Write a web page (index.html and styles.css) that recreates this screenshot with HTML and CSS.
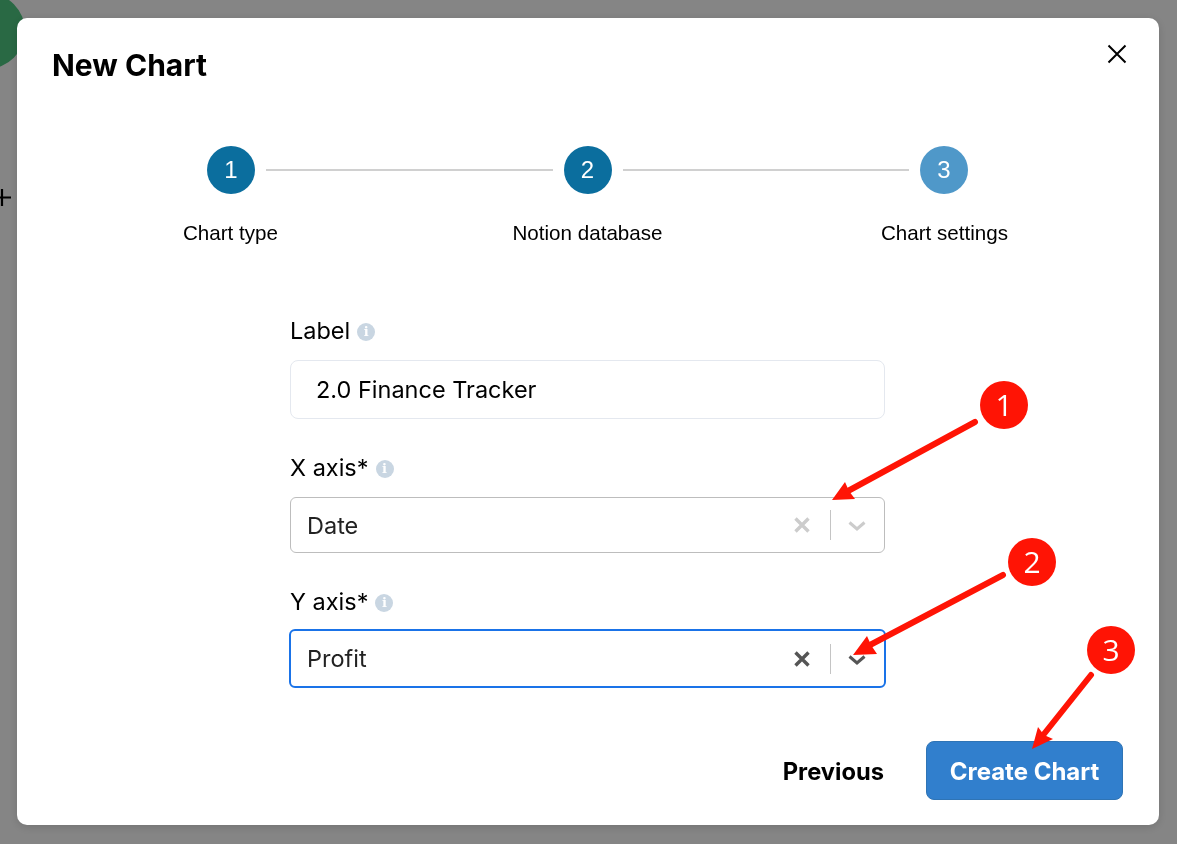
FILE: index.html
```html
<!DOCTYPE html>
<html lang="en">
<head>
    <meta charset="UTF-8">
    <meta name="viewport" content="width=device-width, initial-scale=1.0">
    <title>New Chart</title>
    <link rel="stylesheet" href="styles.css">
</head>
<body>
    <!-- page behind the dialog -->
    <header class="page-header">
        <div class="avatar"></div>
        <h1 class="page-title">My Charts</h1>
    </header>
    <svg class="page-plus" width="12" height="20" viewBox="0 0 12 20"><path d="M-6 9.5H11M2 1V18" stroke="#000" stroke-width="2.2" fill="none"/></svg>

    <div class="overlay">
        <section class="modal">
            <div class="modal-head">
                <h2 class="modal-title">New Chart</h2>
                <button class="close-btn" aria-label="Close">
                    <svg width="20" height="20" viewBox="0 0 20 20"><path d="M1.5 1.5L18.5 18.5M18.5 1.5L1.5 18.5" stroke="#000" stroke-width="2" fill="none"/></svg>
                </button>
            </div>

            <div class="step-track">
                <span class="step-dot">1</span>
                <span class="step-line"></span>
                <span class="step-dot">2</span>
                <span class="step-line"></span>
                <span class="step-dot step-dot-next">3</span>
            </div>
            <div class="step-labels">
                <span>Chart type</span>
                <span>Notion database</span>
                <span>Chart settings</span>
            </div>

            <form class="chart-form">
                <div class="field field-label">
                    <label class="field-name">Label <span class="info">i</span></label>
                    <div class="text-input">2.0 Finance Tracker</div>
                </div>
                <div class="field field-x">
                    <label class="field-name">X axis* <span class="info">i</span></label>
                    <div class="select">
                        <span class="select-value">Date</span>
                        <svg class="select-clear" width="16" height="16" viewBox="0 0 16 16"><path d="M1.5 1.5L14.5 14.5M14.5 1.5L1.5 14.5" stroke="currentColor" stroke-width="3.4" fill="none"/></svg>
                        <span class="select-sep"></span>
                        <svg class="select-arrow" width="18" height="12" viewBox="0 0 18 12"><path d="M1.5 3.5L9 10L16.5 3.5" stroke="currentColor" stroke-width="3" fill="none"/></svg>
                    </div>
                </div>
                <div class="field field-y">
                    <label class="field-name">Y axis* <span class="info">i</span></label>
                    <div class="select select-focus">
                        <span class="select-value">Profit</span>
                        <svg class="select-clear" width="16" height="16" viewBox="0 0 16 16"><path d="M1.5 1.5L14.5 14.5M14.5 1.5L1.5 14.5" stroke="currentColor" stroke-width="3.4" fill="none"/></svg>
                        <span class="select-sep"></span>
                        <svg class="select-arrow" width="18" height="12" viewBox="0 0 18 12"><path d="M1.5 3.5L9 10L16.5 3.5" stroke="currentColor" stroke-width="3" fill="none"/></svg>
                    </div>
                </div>
            </form>

            <div class="modal-actions">
                <button class="btn-prev">Previous</button>
                <button class="btn-create">Create Chart</button>
            </div>
        </section>
    </div>

    <!-- red callouts drawn on top of the screenshot -->
    <svg class="callouts" width="1177" height="844" viewBox="0 0 1177 844">
        <g fill="#ff1405" stroke="none">
            <circle cx="1004" cy="405" r="24"/>
            <circle cx="1032" cy="562" r="24"/>
            <circle cx="1111" cy="650" r="24"/>
            <polygon points="832,500 845,482 849,491 855,499"/>
            <polygon points="853,655 867,636 871,645 877,654"/>
            <polygon points="1032,749 1038,727 1044,735 1053,739"/>
        </g>
        <g stroke="#ff1405" stroke-width="6" stroke-linecap="round">
            <line x1="975" y1="422" x2="848" y2="491"/>
            <line x1="1003" y1="575" x2="870" y2="645"/>
            <line x1="1091" y1="675" x2="1044" y2="734"/>
        </g>
        <g class="callout-num" fill="#fff" text-anchor="middle">
            <text x="1004" y="416">1</text>
            <text x="1032" y="573">2</text>
            <text x="1111" y="661">3</text>
        </g>
    </svg>
</body>
</html>
```

FILE: styles.css
```css
html, body {
    height: 100%;
}
body {
    margin: 0;
    overflow: hidden;
    background-color: #fff;
    font-family: 'Inter', sans-serif;
    color: #000;
}
.page-header {
    display: flex;
    align-items: flex-start;
    gap: 55px;
    margin-left: -51px;
    margin-top: -7px;
}
.avatar {
    flex: none;
    width: 76px;
    height: 76px;
    border-radius: 50%;
    background-color: #4fc982;
}
.page-title {
    margin: 31px 0 0;
    font-size: 40px;
    line-height: 24px;
    font-weight: 700;
}
.page-plus {
    display: block;
    margin-top: 119px;
}

.overlay {
    position: fixed;
    inset: 0;
    display: flex;
    padding: 18px 18px 19px 17px;
    box-sizing: border-box;
    background-color: rgba(0, 0, 0, 0.48);
}
.modal {
    flex: 1;
    display: flex;
    flex-direction: column;
    padding: 0 35px;
    background-color: #fff;
    border-radius: 10px;
    box-shadow: 0 2px 10px rgba(0, 0, 0, 0.15);
}
.modal-head {
    display: flex;
    justify-content: space-between;
    align-items: flex-start;
}
.modal-title {
    margin: 31px 0 0;
    font-size: 30px;
    line-height: 32px;
    font-weight: 700;
}
.close-btn {
    margin: 26px -3px 0 0;
    padding: 0;
    border: 0;
    background: none;
    line-height: 0;
}

.step-track {
    display: flex;
    align-items: center;
    gap: 11px;
    margin-top: 65px;
    padding: 0 156px 0 155px;
}
.step-dot {
    flex: none;
    width: 48px;
    height: 48px;
    display: flex;
    align-items: center;
    justify-content: center;
    border-radius: 50%;
    background-color: #0b6e9e;
    color: #fff;
    font-family: 'Liberation Sans', sans-serif;
    font-size: 24px;
}
.step-dot-next {
    background-color: #4f98c9;
}
.step-line {
    flex: 1;
    height: 2px;
    background-color: #d0d0d0;
}
.step-labels {
    display: grid;
    grid-template-columns: repeat(3, 1fr);
    height: 50px;
    margin-top: 14px;
    padding-right: 1px;
    text-align: center;
    font-family: 'Liberation Sans', sans-serif;
    font-size: 20.6px;
    line-height: 50px;
}

.chart-form {
    width: 595px;
    margin: 0 0 0 238px;
    padding-top: 58px;
}
.field-name {
    display: flex;
    align-items: center;
    gap: 7px;
    font-size: 23.5px;
    line-height: 30px;
}
.info {
    display: inline-flex;
    align-items: center;
    justify-content: center;
    width: 18px;
    height: 18px;
    margin-top: 2px;
    border-radius: 50%;
    background-color: #c9d6e2;
    color: #fff;
    font-family: 'DejaVu Serif', serif;
    font-size: 13px;
    font-weight: 700;
}
.text-input {
    height: 59px;
    box-sizing: border-box;
    margin-top: 14px;
    padding: 0 25px;
    border: 1px solid #e4e8ef;
    border-radius: 8px;
    font-size: 23.5px;
    line-height: 57px;
}
.field-x {
    margin-top: 34px;
}
.field-y {
    margin-top: 34px;
}
.select {
    display: flex;
    align-items: center;
    height: 56px;
    box-sizing: border-box;
    margin-top: 14px;
    padding: 0 18px 0 16px;
    border: 1px solid #bdbdbd;
    border-radius: 6px;
    color: #ccc;
}
.field-y .select {
    height: 59px;
    margin: 12px -1px 0;
    border: 2px solid #1a73e8;
    color: #555;
}
.select-value {
    flex: 1;
    font-size: 23.5px;
    color: #222;
}
.select-clear {
    margin-right: 20px;
}
.select-sep {
    width: 1px;
    height: 30px;
    margin-right: 17px;
    background-color: #c4c4c4;
}

.modal-actions {
    display: flex;
    justify-content: flex-end;
    align-items: center;
    gap: 42px;
    margin-top: 53px;
    padding-right: 1px;
}
.btn-prev {
    padding: 2px 0 0;
    border: 0;
    background: none;
    font-family: 'Inter', sans-serif;
    font-size: 23.7px;
    font-weight: 700;
    color: #000;
}
.btn-create {
    width: 197px;
    height: 59px;
    padding-top: 2px;
    border: 1px solid #2f74b5;
    border-radius: 8px;
    background-color: #317fcd;
    color: #fff;
    font-family: 'Inter', sans-serif;
    font-size: 24px;
    font-weight: 700;
}

.callouts {
    position: fixed;
    left: 0;
    top: 0;
}
.callout-num {
    font-family: 'Open Sans', sans-serif;
    font-size: 30px;
}
```
